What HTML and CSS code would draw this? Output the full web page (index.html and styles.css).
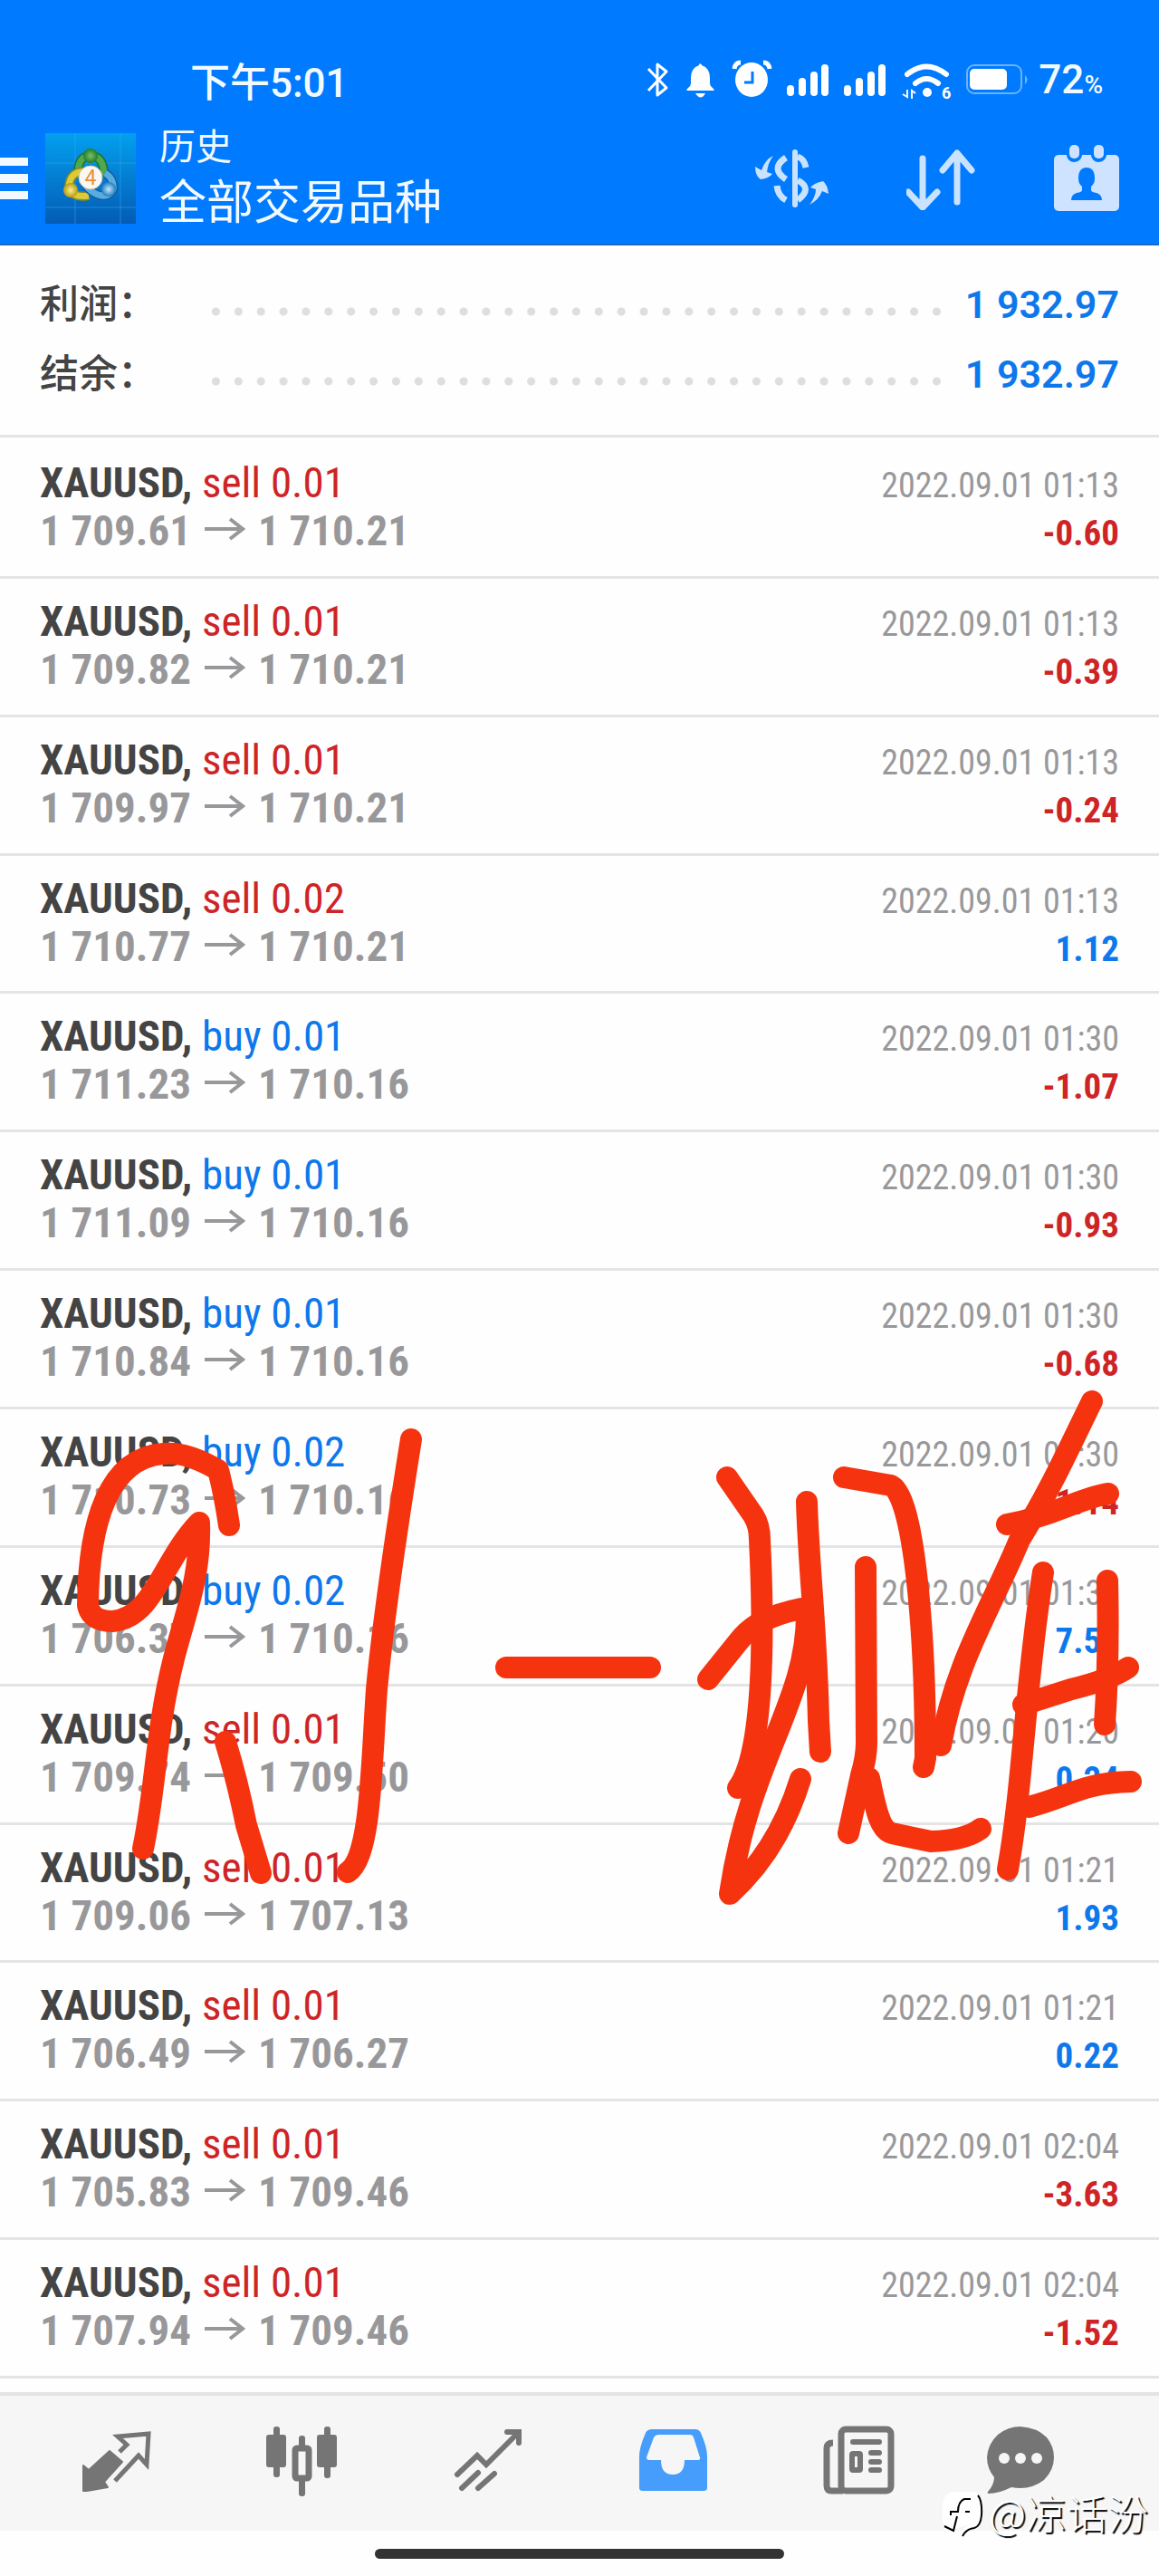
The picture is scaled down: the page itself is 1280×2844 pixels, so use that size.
FILE: index.html
```html
<!DOCTYPE html>
<html lang="zh-CN">
<head>
  <meta charset="UTF-8" />
  <meta name="viewport" content="width=device-width, initial-scale=1.0" />
  <title>历史</title>
  <link rel="stylesheet" href="styles.css">
</head>
<body>
  <header class="header">
    <div class="status-bar">
      <span class="clock">下午5:01</span>
      <svg class="status-icons" width="430" height="50" viewBox="0 -3 430 50" fill="#fff">
        <!-- bluetooth -->
        <path d="M3 9 L23 30 L13 38 V4 L23 12 L3 33" transform="translate(0 1)" fill="none" stroke="#fff" stroke-width="3" stroke-linejoin="round" />
        <!-- bell -->
        <path d="M59 5 q2-2 3 1 q9 3 9 14 v6 q0 3 3 5 q3 3 1 3 H46 q-2 0 1-3 q3-2 3-5 v-6 q0-11 9-14z M55 37 h11 q-5 9-11 0z" />
        <!-- alarm clock -->
        <ellipse cx="117" cy="22" rx="18" ry="19" />
        <path d="M98 10 q1-7 7-7 M137 10 q-1-7-7-7" fill="none" stroke="#fff" stroke-width="5" />
        <path d="M118 13 v12 h-9" fill="none" stroke="#007aff" stroke-width="3" />
        <!-- signal bars -->
        <rect x="156" y="28" width="8" height="12" rx="4" />
        <rect x="169" y="20" width="8" height="20" rx="4" />
        <rect x="182" y="13" width="8" height="27" rx="4" />
        <rect x="194" y="5" width="8" height="35" rx="4" />
        <rect x="219" y="28" width="8" height="12" rx="4" />
        <rect x="232" y="20" width="8" height="20" rx="4" />
        <rect x="245" y="13" width="8" height="27" rx="4" />
        <rect x="257" y="5" width="8" height="35" rx="4" />
        <!-- wifi -->
        <path d="M289 16 q21-17 43 0 M298 26 q12-10 25 0" fill="none" stroke="#fff" stroke-width="6" stroke-linecap="round" />
        <circle cx="311" cy="36" r="5" />
        <path d="M289 33 v8 l-5-3 M294 43 v-9 l4 3" fill="none" stroke="#fff" stroke-width="2" />
        <text class="wifi-gen" x="327" y="43">6</text>
        <!-- battery -->
        <rect x="355" y="6" width="60" height="31" rx="8" fill="none" stroke="#6ab4ff" stroke-width="2" />
        <rect x="358" y="10" width="41" height="23" rx="5" />
        <path d="M419 17 q5 5 0 10z" fill="#6ab4ff" />
      </svg>
      <span class="percent">72<small>%</small></span>
    </div>

    <div class="app-bar">
      <button class="menu" aria-label="菜单">
        <svg width="31" height="46" viewBox="0 0 31 46" fill="#f2faff">
          <rect y="0" width="31" height="9" />
          <rect y="18" width="31" height="10" />
          <rect y="37" width="31" height="9" />
        </svg>
      </button>
      <svg class="logo" width="100" height="100" viewBox="0 0 100 100">
        <defs>
          <linearGradient id="bg" x1="0" y1="0" x2="0" y2="1">
            <stop offset="0" stop-color="#03a0ee" />
            <stop offset="1" stop-color="#045bb5" />
          </linearGradient>
          <radialGradient id="green"><stop offset="0" stop-color="#7cc063" /><stop offset="1" stop-color="#1f7d2c" /></radialGradient>
          <radialGradient id="yellow"><stop offset="0" stop-color="#fff08a" /><stop offset="1" stop-color="#b59a13" /></radialGradient>
          <radialGradient id="blue"><stop offset="0" stop-color="#c4e9ff" /><stop offset="1" stop-color="#1f7cc0" /></radialGradient>
        </defs>
        <rect width="100" height="100" fill="url(#bg)" />
        <path d="M33 0 V100 M83 0 V100 M0 33 H100 M0 82 H100" stroke="#2fb0ee" stroke-opacity=".5" />
        <path d="M36 48 Q35 25 50 25 Q65 25 65 48" fill="none" stroke="#1f6f35" stroke-width="10" />
        <path d="M36 48 Q35 25 50 25 Q65 25 65 48" fill="none" stroke="#4fa94c" stroke-width="7" />
        <path d="M45 43 Q27 41 26 60 Q30 72 48 69" fill="none" stroke="#8c8a1c" stroke-width="10" />
        <path d="M45 43 Q27 41 26 60 Q30 72 48 69" fill="none" stroke="#dccb38" stroke-width="7" />
        <path d="M66 44 Q76 50 75 62 Q68 74 54 66 Q47 62 43 55" fill="none" stroke="#145d9e" stroke-width="10" />
        <path d="M66 44 Q76 50 75 62 Q68 74 54 66 Q47 62 43 55" fill="none" stroke="#59acdf" stroke-width="7" />
        <circle cx="50" cy="25" r="8" fill="url(#green)" />
        <circle cx="28" cy="63" r="8" fill="url(#yellow)" />
        <circle cx="70" cy="62" r="8" fill="url(#blue)" />
        <circle cx="50" cy="49" r="13" fill="#fbf8f4" stroke="#c9c2b4" />
        <text class="logo-num" x="50" y="57" text-anchor="middle">4</text>
      </svg>
      <div class="titles">
        <h1>历史</h1>
        <p>全部交易品种</p>
      </div>
      <div class="actions">
        <button aria-label="货币">
          <svg width="84" height="70" viewBox="0 0 84 70" fill="none" stroke="#c9e3ff">
            <path d="M46 6 V64" stroke-width="6" stroke-linecap="round" />
            <path d="M36 12 Q18 24 36 36 M26 43 Q27 54 36 59" stroke-width="7" />
            <path d="M49 11 Q56 13 58 23 M49 37 Q66 46 49 59" stroke-width="7" />
            <path d="M22 10 Q13 14 9 26 L2 22 Q2 32 8 36 Q17 35 21 30 L15 28 Q16 18 22 10z M62 64 Q72 59 76 49 L83 52 Q82 42 77 38 Q67 40 63 45 L69 47 Q69 55 62 64z" fill="#c9e3ff" stroke="none" />
          </svg>
        </button>
        <button aria-label="排序">
          <svg width="78" height="70" viewBox="0 0 78 70" fill="none" stroke="#c9e3ff" stroke-width="7" stroke-linecap="round" stroke-linejoin="round">
            <path d="M18 13 V66 M2 50 L18 67 L34 50 M56 61 V8 M40 26 L56 7 L72 26" />
          </svg>
        </button>
        <button aria-label="日期">
          <svg width="72" height="76" viewBox="0 0 72 76">
            <rect x="0" y="12" width="72" height="62" rx="5" fill="#cde3ff" />
            <path d="M14 10 h17 v3 q-2 7-9 7 q-6 0-8-7z M41 10 h17 v3 q-2 7-9 7 q-6 0-8-7z" fill="#007aff" />
            <rect x="17" y="1" width="11" height="15" rx="5" fill="#cde3ff" />
            <rect x="44" y="1" width="11" height="15" rx="5" fill="#cde3ff" />
            <path d="M36 26 q9 0 9 12 q0 6-4 9 v4 q0 2 6 3 q6 2 6 8 H19 q0-6 6-8 q6-1 6-3 v-4 q-4-3-4-9 q0-12 9-12z" fill="#007aff" />
          </svg>
        </button>
      </div>
    </div>
  </header>

  <main>
    <section class="summary">
      <div class="sum-row"><span class="sum-label">利润：</span><span class="dots"></span><span class="sum-value">1 932.97</span></div>
      <div class="sum-row"><span class="sum-label">结余：</span><span class="dots"></span><span class="sum-value">1 932.97</span></div>
    </section>

    <svg class="defs" width="0" height="0">
      <symbol id="arrow" viewBox="0 0 46 26"><path d="M1 13 H43 M29 2 L43 13 L29 24" fill="none" stroke="#98989b" stroke-width="4" /></symbol>
    </svg>

    <ul class="deals">
      <li class="deal">
        <div class="line"><span><b>XAUUSD,</b> <span class="sell">sell 0.01</span></span><time>2022.09.01 01:13</time></div>
        <div class="line"><span class="price">1 709.61<svg class="to"><use href="#arrow" /></svg>1 710.21</span><strong class="loss">-0.60</strong></div>
      </li>
      <li class="deal">
        <div class="line"><span><b>XAUUSD,</b> <span class="sell">sell 0.01</span></span><time>2022.09.01 01:13</time></div>
        <div class="line"><span class="price">1 709.82<svg class="to"><use href="#arrow" /></svg>1 710.21</span><strong class="loss">-0.39</strong></div>
      </li>
      <li class="deal">
        <div class="line"><span><b>XAUUSD,</b> <span class="sell">sell 0.01</span></span><time>2022.09.01 01:13</time></div>
        <div class="line"><span class="price">1 709.97<svg class="to"><use href="#arrow" /></svg>1 710.21</span><strong class="loss">-0.24</strong></div>
      </li>
      <li class="deal">
        <div class="line"><span><b>XAUUSD,</b> <span class="sell">sell 0.02</span></span><time>2022.09.01 01:13</time></div>
        <div class="line"><span class="price">1 710.77<svg class="to"><use href="#arrow" /></svg>1 710.21</span><strong class="gain">1.12</strong></div>
      </li>
      <li class="deal">
        <div class="line"><span><b>XAUUSD,</b> <span class="buy">buy 0.01</span></span><time>2022.09.01 01:30</time></div>
        <div class="line"><span class="price">1 711.23<svg class="to"><use href="#arrow" /></svg>1 710.16</span><strong class="loss">-1.07</strong></div>
      </li>
      <li class="deal">
        <div class="line"><span><b>XAUUSD,</b> <span class="buy">buy 0.01</span></span><time>2022.09.01 01:30</time></div>
        <div class="line"><span class="price">1 711.09<svg class="to"><use href="#arrow" /></svg>1 710.16</span><strong class="loss">-0.93</strong></div>
      </li>
      <li class="deal">
        <div class="line"><span><b>XAUUSD,</b> <span class="buy">buy 0.01</span></span><time>2022.09.01 01:30</time></div>
        <div class="line"><span class="price">1 710.84<svg class="to"><use href="#arrow" /></svg>1 710.16</span><strong class="loss">-0.68</strong></div>
      </li>
      <li class="deal">
        <div class="line"><span><b>XAUUSD,</b> <span class="buy">buy 0.02</span></span><time>2022.09.01 01:30</time></div>
        <div class="line"><span class="price">1 710.73<svg class="to"><use href="#arrow" /></svg>1 710.16</span><strong class="loss">-1.14</strong></div>
      </li>
      <li class="deal">
        <div class="line"><span><b>XAUUSD,</b> <span class="buy">buy 0.02</span></span><time>2022.09.01 01:30</time></div>
        <div class="line"><span class="price">1 706.37<svg class="to"><use href="#arrow" /></svg>1 710.16</span><strong class="gain">7.58</strong></div>
      </li>
      <li class="deal">
        <div class="line"><span><b>XAUUSD,</b> <span class="sell">sell 0.01</span></span><time>2022.09.01 01:20</time></div>
        <div class="line"><span class="price">1 709.74<svg class="to"><use href="#arrow" /></svg>1 709.50</span><strong class="gain">0.24</strong></div>
      </li>
      <li class="deal">
        <div class="line"><span><b>XAUUSD,</b> <span class="sell">sell 0.01</span></span><time>2022.09.01 01:21</time></div>
        <div class="line"><span class="price">1 709.06<svg class="to"><use href="#arrow" /></svg>1 707.13</span><strong class="gain">1.93</strong></div>
      </li>
      <li class="deal">
        <div class="line"><span><b>XAUUSD,</b> <span class="sell">sell 0.01</span></span><time>2022.09.01 01:21</time></div>
        <div class="line"><span class="price">1 706.49<svg class="to"><use href="#arrow" /></svg>1 706.27</span><strong class="gain">0.22</strong></div>
      </li>
      <li class="deal">
        <div class="line"><span><b>XAUUSD,</b> <span class="sell">sell 0.01</span></span><time>2022.09.01 02:04</time></div>
        <div class="line"><span class="price">1 705.83<svg class="to"><use href="#arrow" /></svg>1 709.46</span><strong class="loss">-3.63</strong></div>
      </li>
      <li class="deal">
        <div class="line"><span><b>XAUUSD,</b> <span class="sell">sell 0.01</span></span><time>2022.09.01 02:04</time></div>
        <div class="line"><span class="price">1 707.94<svg class="to"><use href="#arrow" /></svg>1 709.46</span><strong class="loss">-1.52</strong></div>
      </li>
    </ul>
  </main>

  <nav class="tabs">
    <button aria-label="报价">
      <svg width="80" height="80" viewBox="87 2677 80 80">
        <path d="M91 2722 L97 2727 L120 2706 L134 2718 L114 2740 L118 2746 L95 2750 L91 2750z" fill="#757575" stroke="#757575" stroke-width="2" stroke-linejoin="round" />
        <path d="M131 2707 L139 2699 L129 2690 L163 2687 L161 2721 L152 2711 L126 2739" fill="none" stroke="#757575" stroke-width="5" />
      </svg>
    </button>
    <button aria-label="图表">
      <svg width="80" height="80" viewBox="292 2677 80 80" fill="#757575">
        <rect x="293" y="2688" width="22" height="36" rx="3" />
        <rect x="301" y="2679" width="7" height="56" rx="3" />
        <rect x="349" y="2688" width="22" height="36" rx="3" />
        <rect x="357" y="2679" width="7" height="57" rx="3" />
        <rect x="329" y="2689" width="7" height="67" rx="3" />
        <rect x="325" y="2703" width="15" height="33" rx="2" fill="#f6f6f6" stroke="#757575" stroke-width="7" />
      </svg>
    </button>
    <button aria-label="交易">
      <svg width="80" height="80" viewBox="497 2677 80 80" fill="none" stroke="#757575" stroke-width="6" stroke-linecap="round">
        <path d="M504 2732 L526 2711 L536 2721 L571 2686 M559 2685 H572 V2697 M509 2747 L527 2730 M527 2747 L545 2731" />
      </svg>
    </button>
    <button class="active" aria-label="历史">
      <svg width="80" height="80" viewBox="703 2677 80 80">
        <path d="M720 2682 H768 Q772 2682 774 2686 Q781 2702 781 2712 V2747 Q781 2750 777 2750 H710 Q706 2750 706 2747 V2712 Q706 2702 713 2686 Q715 2682 720 2682z M727 2688 Q724 2688 722 2691 L714 2713 Q714 2716 717 2716 H730 Q730 2732 743 2732 Q756 2732 756 2716 H771 Q774 2716 773 2713 L766 2691 Q765 2688 762 2688z" fill="#469dfb" fill-rule="evenodd" />
      </svg>
    </button>
    <button aria-label="新闻">
      <svg width="80" height="80" viewBox="909 2677 80 80" fill="none" stroke="#757575" stroke-width="7">
        <rect x="930" y="2682" width="55" height="68" rx="5" />
        <path d="M921 2697 Q914 2697 914 2703 V2744 Q914 2750 919 2750 H932" />
        <path d="M943 2696 H972 M963 2708 H972 M963 2718 H972 M963 2727 H972" stroke-width="6" stroke-linecap="round" />
        <rect x="942" y="2709" width="9" height="18" rx="1" stroke-width="6" />
      </svg>
    </button>
    <button class="chat" aria-label="消息">
      <svg width="80" height="80" viewBox="1086 2677 80 80">
        <path d="M1126 2679 Q1144 2680 1155 2691 Q1163 2701 1163 2713 Q1163 2727 1152 2738 Q1140 2747 1126 2747 Q1121 2747 1116 2746 Q1102 2753 1091 2753 Q1089 2753 1090 2751 Q1097 2743 1097 2735 Q1089 2725 1089 2713 Q1090 2698 1101 2688 Q1112 2679 1126 2679z" fill="#757575" />
        <circle cx="1108" cy="2714" r="6" fill="#f6f6f6" />
        <circle cx="1126" cy="2714" r="6" fill="#f6f6f6" />
        <circle cx="1144" cy="2714" r="6" fill="#f6f6f6" />
      </svg>
    </button>
  </nav>
  <div class="home-bar"><span></span></div>

  <!-- freehand note over the list -->
  <svg class="scribble" viewBox="0 1500 1280 640" fill="none" stroke="#f6330f" stroke-width="24" stroke-linecap="round" stroke-linejoin="round">
    <path d="M253 1684 Q248 1650 241 1623 Q205 1602 180 1605 C120 1610 98 1680 97 1772 Q100 1790 124 1790 C170 1786 178 1725 220 1681 C222 1740 205 1780 192 1831 C172 1910 172 1975 158 2041" />
    <path d="M249 1923 Q262 1965 272 2015 L288 2068" />
    <path d="M454 1589 Q425 1770 416 1865 C410 1950 410 2050 384 2067" />
    <path d="M559 1841 H718" />
    <path d="M803 1631 L832 1673 Q839 1684 839 1700 C844 1800 844 1935 815 1974" />
    <path d="M782 1854 L815 1813 C825 1800 840 1785 885 1776 L891 1780 C892 1880 828 1940 806 2091 Q860 2042 884 1964" />
    <path d="M891 1658 C893 1730 902 1800 904 1900 L906 1934" />
    <path d="M956 1730 L957 1924 Q957 1940 951 1960 L937 2024" />
    <path d="M960 1963 C966 1990 970 2020 985 2024 L1028 2033 Q1066 2032 1083 2019" />
    <path d="M932 1631 L984 1640 C1008 1650 1022 1790 1022 1941 L1020 1951" />
    <path d="M1206 1547 C1180 1600 1160 1645 1126 1700 C1095 1775 1055 1835 1039 1927" />
    <path d="M1112 1683 C1160 1675 1195 1653 1224 1649" />
    <path d="M1152 1736 C1132 1860 1130 1970 1113 2064" />
    <path d="M1130 1882 L1183 1865 Q1225 1855 1246 1841" />
    <path d="M1223 1745 Q1225 1830 1220 1904" />
    <path d="M1136 1995 C1180 1984 1195 1968 1249 1967" />
  </svg>

  <div class="watermark">
    <svg width="46" height="54" viewBox="0 0 46 54">
      <path d="M12 4 H36 Q44 6 45 20 Q46 38 40 43 Q34 45 30 46 L24 52 L25 44 Q31 39 35 38 L18 44 L10 47 Q2 44 1 34 V18 Q2 6 12 4z" fill="#fff" />
      <path d="M40 8 Q45 14 44 30 Q43 42 36 44 Q27 45 23 53" fill="none" stroke="#000" stroke-width="2" />
      <path d="M32 12 H25 Q18 15 18 26 H10 V30 M17 31 L13 47 L3 42 M26 26 h5" fill="none" stroke="#000" stroke-width="2" />
    </svg>
    <span>@凉话汾</span>
  </div>
</body>
</html>
```

FILE: styles.css
```css
:root {
  --blue: #007aff;
  --gain: #0d78ec;
  --loss: #ce2426;
  --line: #e4e4e4;
  --muted: #98989b;
}

* {
  box-sizing: border-box;
}

body {
  margin: 0;
  min-height: 100vh;
  display: flex;
  flex-direction: column;
  position: relative;
  background: #fefefe;
  color: #444;
  font-family: Roboto, "Noto Sans CJK SC", sans-serif;
}

h1, p, ul {
  margin: 0;
  padding: 0;
  font-weight: 400;
}

button {
  padding: 0;
  border: none;
  background: none;
  cursor: pointer;
}

svg {
  display: block;
}

.header {
  background: var(--blue);
  color: #f2faff;
  border-bottom: 2px solid #1a6ac4;
}

.status-bar {
  display: flex;
  align-items: center;
  padding: 56px 62px 0 210px;
  height: 120px;
}

.clock {
  font-size: 44px;
  font-weight: 500;
  margin-right: auto;
}

.percent {
  font-size: 44px;
  font-weight: 500;
  margin-left: 4px;
}

.percent small {
  font-size: 28px;
}

.wifi-gen {
  font-size: 18px;
  font-weight: 700;
}

.app-bar {
  display: flex;
  align-items: center;
  height: 149px;
  padding: 4px 44px 0 0;
}

.menu {
  margin-right: 19px;
}

.logo-num {
  font-size: 23px;
  fill: #e8923c;
}

.titles {
  margin-left: 26px;
}

.titles h1 {
  font-size: 40px;
  line-height: 56px;
}

.titles p {
  font-size: 52px;
  line-height: 68px;
}

.actions {
  display: flex;
  align-items: center;
  gap: 85px;
  margin-left: auto;
}

main {
  flex: 1;
  display: flex;
  flex-direction: column;
}

.summary {
  padding: 26px 44px 29px;
  border-bottom: 3px solid var(--line);
}

.sum-row {
  display: flex;
  align-items: center;
  height: 77px;
}

.sum-label {
  width: 182px;
  font-size: 43px;
  font-weight: 500;
  line-height: 72px;
}

.dots {
  flex: 1;
  height: 10px;
  margin: 16px 19px 0 0;
  background: radial-gradient(circle, #dedede 4px, transparent 5px) 0 0 / 25px 10px round;
}

.sum-value {
  font-size: 43px;
  font-weight: 600;
  color: var(--gain);
}

.defs {
  position: absolute;
}

.deals {
  flex: 1;
  display: flex;
  flex-direction: column;
  padding: 3px 0 15px;
  list-style: none;
}

.deal {
  flex: 1;
  padding: 22px 44px 0;
  border-bottom: 3px solid var(--line);
  font-family: "Roboto Condensed", Roboto, sans-serif;
  font-size: 47px;
}

.line {
  display: flex;
  justify-content: space-between;
  align-items: baseline;
  line-height: 50px;
}

.sell, .loss {
  color: var(--loss);
}

.buy, .gain {
  color: var(--gain);
}

.price {
  color: var(--muted);
  font-weight: 700;
}

.to {
  display: inline-block;
  width: 46px;
  height: 26px;
  margin: 0 14px;
  vertical-align: 5px;
}

time {
  font-size: 38px;
  color: var(--muted);
}

.line strong {
  font-size: 39px;
}

.tabs {
  display: grid;
  grid-template-columns: repeat(6, 1fr);
  height: 153px;
  padding: 0 25px 5px;
  background: #f6f6f6;
  border-top: 4px solid var(--line);
}

.tabs button {
  display: flex;
  justify-content: center;
  align-items: center;
}

.tabs .chat {
  padding-right: 52px;
}

.home-bar {
  display: flex;
  justify-content: center;
  padding-top: 20px;
  height: 50px;
}

.home-bar span {
  width: 452px;
  height: 11px;
  border-radius: 6px;
  background: #333;
}

.scribble {
  position: absolute;
  top: 1500px;
  left: 0;
  width: 100%;
  pointer-events: none;
}

.watermark {
  position: absolute;
  right: 12px;
  bottom: 38px;
  display: flex;
  align-items: center;
  gap: 6px;
  font-family: "Noto Sans CJK SC", sans-serif;
  font-size: 45px;
  font-weight: 300;
  color: #fff;
  text-shadow: 2px 2px 1px #000;
}
```
